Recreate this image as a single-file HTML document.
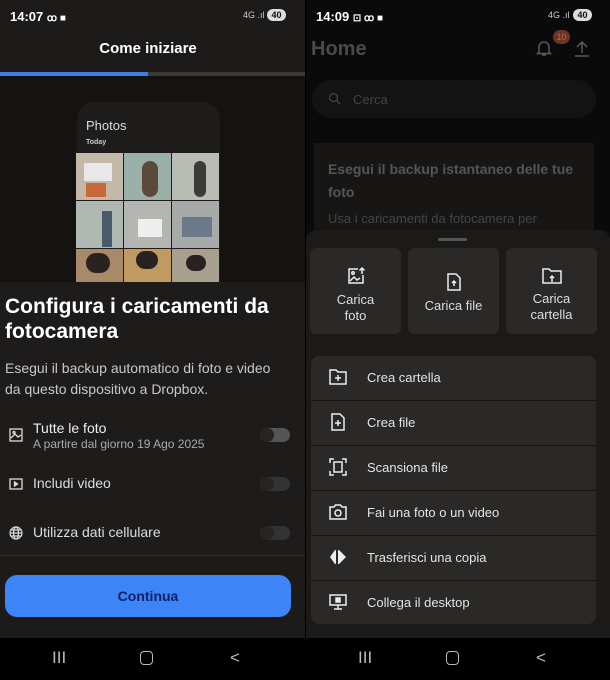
<!DOCTYPE html>
<html><head><meta charset="utf-8"><style>
*{margin:0;padding:0;box-sizing:border-box}
body{width:610px;height:680px;background:#000;font-family:"Liberation Sans",sans-serif;color:#eee;position:relative;overflow:hidden}
.abs{position:absolute}
.l{left:0;top:0;width:305px;height:680px;background:#141312}
.r{left:306px;top:0;width:304px;height:680px;background:#0b0a0a}
.sb{font-size:13px;font-weight:bold;color:#fff}
.nav{position:absolute;bottom:0;height:42px;background:#000;width:100%}
.nav span{position:absolute;top:10px;color:#bbb;font-size:17px;font-weight:300}
.tog{position:absolute;width:30px;height:14px;border-radius:7px;background:#333}
.tog:after{content:"";position:absolute;left:0;top:0;width:14px;height:14px;border-radius:7px;background:#262524}
.tile{position:absolute;top:248px;width:91px;height:86px;background:#2a2928;border-radius:6px;text-align:center;font-size:13px;color:#ddd;line-height:16px}
.row{position:absolute;left:0;width:285px;height:44px;background:#2a2928;font-size:13px;color:#e4e4e4}
.row b{font-weight:normal;position:absolute;left:56px;top:14px}
.row svg{position:absolute;left:18px;top:12px}
.g{position:absolute;width:47px;height:47px;overflow:hidden}
</style></head><body>
<div class="abs l">
 <div class="abs" style="left:0;top:0;width:305px;height:72px;background:#1d1b1a"></div>
 <div class="abs sb" style="left:10px;top:9px">14:07 <span style="font-size:10px">ꝏ ■</span></div>
 <div class="abs" style="left:243px;top:10px;font-size:9px;color:#ccc">4G .ıl</div>
 <div class="abs" style="left:267px;top:9px;width:19px;height:12px;border-radius:6px;background:#ddd;color:#111;font-size:9px;text-align:center;line-height:12px;font-weight:bold">40</div>
 <div class="abs" style="left:0;top:40px;width:296px;text-align:center;font-size:15px;font-weight:bold;color:#fff">Come iniziare</div>
 <div class="abs" style="left:0;top:72px;width:305px;height:4px;background:#3a3938"></div>
 <div class="abs" style="left:0;top:72px;width:148px;height:4px;background:#3f7de8"></div>
 <div class="abs" style="left:77px;top:102px;width:143px;height:180px;background:#1e1d1c;border-radius:18px 18px 0 0"></div>
 <div class="abs" style="left:86px;top:118px;font-size:13px;color:#ddd">Photos</div>
 <div class="abs" style="left:86px;top:139px;font-size:7px;color:#ccc;font-weight:bold">Today</div>
 <div class="g" style="left:76px;top:153px;background:#c4b8a8"><div class="abs" style="left:8px;top:10px;width:28px;height:18px;background:#e8e8e8"></div><div class="abs" style="left:10px;top:30px;width:20px;height:14px;background:#c8693a"></div></div>
 <div class="g" style="left:124px;top:153px;background:#9bb0a8"><div class="abs" style="left:18px;top:8px;width:16px;height:36px;background:#5a4a3a;border-radius:8px"></div></div>
 <div class="g" style="left:172px;top:153px;background:#b8bcb4"><div class="abs" style="left:22px;top:8px;width:12px;height:36px;background:#3a3a38;border-radius:6px"></div></div>
 <div class="g" style="left:76px;top:201px;background:#b0b8b4"><div class="abs" style="left:26px;top:10px;width:10px;height:36px;background:#4a5a6a"></div></div>
 <div class="g" style="left:124px;top:201px;background:#b4b6b2"><div class="abs" style="left:14px;top:18px;width:24px;height:18px;background:#eee"></div></div>
 <div class="g" style="left:172px;top:201px;background:#a6aaa8"><div class="abs" style="left:10px;top:16px;width:30px;height:20px;background:#6a7a8a"></div></div>
 <div class="g" style="left:76px;top:249px;height:33px;background:#a88a68"><div class="abs" style="left:10px;top:4px;width:24px;height:20px;background:#2a2220;border-radius:10px"></div></div>
 <div class="g" style="left:124px;top:249px;height:33px;background:#c09a60"><div class="abs" style="left:12px;top:2px;width:22px;height:18px;background:#2a2220;border-radius:10px"></div></div>
 <div class="g" style="left:172px;top:249px;height:33px;background:#a8a08e"><div class="abs" style="left:14px;top:6px;width:20px;height:16px;background:#2a2220;border-radius:9px"></div></div>
 <div class="abs" style="left:0;top:282px;width:305px;height:273px;background:#1e1c1b"></div>
 <div class="abs" style="left:5px;top:294px;font-size:21px;font-weight:bold;color:#fff;line-height:25px">Configura i caricamenti da<br>fotocamera</div>
 <div class="abs" style="left:5px;top:358px;font-size:14px;color:#c8c8c8;line-height:21px">Esegui il backup automatico di foto e video<br>da questo dispositivo a Dropbox.</div>
 <svg class="abs" style="left:9px;top:428px" width="14" height="14" viewBox="0 0 14 14" fill="none" stroke="#ddd" stroke-width="1.3"><rect x="1" y="1" width="12" height="12"/><path d="M2 10l4-4 3 3 3-2"/><circle cx="5" cy="4.5" r="1"/></svg>
 <div class="abs" style="left:33px;top:420px;font-size:14px;color:#eee">Tutte le foto</div>
 <div class="abs" style="left:33px;top:437px;font-size:12px;color:#aaa">A partire dal giorno 19 Ago 2025</div>
 <div class="tog" style="left:260px;top:428px;background:#555"></div>
 <svg class="abs" style="left:9px;top:477px" width="14" height="14" viewBox="0 0 14 14" fill="none" stroke="#ddd" stroke-width="1.3"><rect x="1" y="2" width="12" height="10"/><path d="M5.5 5v4l3-2z" fill="#ddd"/></svg>
 <div class="abs" style="left:33px;top:475px;font-size:14px;color:#ddd">Includi video</div>
 <div class="tog" style="left:260px;top:477px"></div>
 <svg class="abs" style="left:9px;top:526px" width="14" height="14" viewBox="0 0 14 14" fill="none" stroke="#ddd" stroke-width="1.2"><circle cx="7" cy="7" r="6"/><ellipse cx="7" cy="7" rx="2.5" ry="6"/><path d="M1 7h12M2 4h10M2 10h10"/></svg>
 <div class="abs" style="left:33px;top:524px;font-size:14px;color:#ddd">Utilizza dati cellulare</div>
 <div class="tog" style="left:260px;top:526px"></div>
 <div class="abs" style="left:0;top:555px;width:305px;height:83px;background:#1c1b1a;border-top:1px solid #2c2b2a"></div>
 <div class="abs" style="left:5px;top:575px;width:286px;height:42px;border-radius:12px;background:#3d84f7;color:#0d1f66;font-size:14px;font-weight:bold;text-align:center;line-height:42px">Continua</div>
 <div class="nav"><span style="left:52px">III</span><span style="left:140px;top:13px;width:13px;height:14px;border:1.3px solid #bbb;border-radius:4px"></span><span style="left:230px">&lt;</span></div>
</div>
<div class="abs r">
 <div class="abs sb" style="left:10px;top:9px">14:09 <span style="font-size:10px">⊡ ꝏ ■</span></div>
 <div class="abs" style="left:242px;top:10px;font-size:9px;color:#ccc">4G .ıl</div>
 <div class="abs" style="left:267px;top:9px;width:19px;height:12px;border-radius:6px;background:#ddd;color:#111;font-size:9px;text-align:center;line-height:12px;font-weight:bold">40</div>
 <div class="abs" style="left:5px;top:38px;font-size:20px;font-weight:bold;color:#4a4a4a">Home</div>
 <svg class="abs" style="left:228px;top:38px" width="20" height="20" viewBox="0 0 20 20" fill="none" stroke="#5a5a5a" stroke-width="1.5"><path d="M5 14V9a5 5 0 0110 0v5l1.5 1.5h-13zM8 17h4"/></svg>
 <div class="abs" style="left:247px;top:30px;width:17px;height:14px;border-radius:7px;background:#6e3423;color:#aa7060;font-size:9px;text-align:center;line-height:14px">10</div>
 <svg class="abs" style="left:266px;top:38px" width="20" height="20" viewBox="0 0 20 20" fill="none" stroke="#5a5a5a" stroke-width="1.5"><path d="M10 15V4M5 9l5-5 5 5M3 18h14"/></svg>
 <div class="abs" style="left:6px;top:80px;width:284px;height:38px;border-radius:19px;background:#141313"></div>
 <svg class="abs" style="left:22px;top:92px" width="13" height="13" viewBox="0 0 13 13" fill="none" stroke="#444" stroke-width="1.3"><circle cx="5.5" cy="5.5" r="4"/><path d="M8.5 8.5l3.5 3.5"/></svg>
 <div class="abs" style="left:47px;top:92px;font-size:13px;color:#444">Cerca</div>
 <div class="abs" style="left:8px;top:143px;width:280px;height:90px;background:#171615"></div>
 <div class="abs" style="left:22px;top:158px;font-size:14px;font-weight:bold;color:#555;line-height:23px">Esegui il backup istantaneo delle tue<br>foto</div>
 <div class="abs" style="left:22px;top:211px;font-size:13px;color:#444">Usa i caricamenti da fotocamera per</div>
 <div class="abs" style="left:0;top:230px;width:304px;height:408px;background:#1b1a19;border-radius:10px 10px 0 0"></div>
 <div class="abs" style="left:132px;top:238px;width:29px;height:3px;border-radius:2px;background:#555"></div>
 <div class="tile" style="left:4px"><svg style="margin-top:19px" width="18" height="18" viewBox="0 0 18 18" fill="none" stroke="#eee" stroke-width="1.5"><path d="M11 2H2v14h14V8"/><path d="M3 14l4-4 3 3 3-2"/><circle cx="6" cy="6" r="1.2"/><path d="M15 7V1M12.5 3.5L15 1l2.5 2.5"/></svg><div style="margin-top:3px">Carica<br>foto</div></div>
 <div class="tile" style="left:102px"><svg style="margin-top:25px" width="16" height="18" viewBox="0 0 16 18" fill="none" stroke="#eee" stroke-width="1.5"><path d="M2 1h8l4 4v12H2z"/><path d="M8 13V8M6 10l2-2 2 2" /></svg><div style="margin-top:3px">Carica file</div></div>
 <div class="tile" style="left:200px"><svg style="margin-top:19px" width="20" height="17" viewBox="0 0 20 17" fill="none" stroke="#eee" stroke-width="1.5"><path d="M1 2h6l2 2h10v12H1z"/><path d="M10 15V9M8 11l2-2 2 2"/></svg><div style="margin-top:3px">Carica<br>cartella</div></div>
 <div class="abs" style="left:5px;top:356px;width:285px;height:268px;border-radius:8px;overflow:hidden;background:#151413">
  <div class="row" style="top:0"><svg width="18" height="18" viewBox="0 0 18 18" fill="none" stroke="#eee" stroke-width="1.5"><path d="M1 2h6l2 2h8v12H1z"/><path d="M9 7v6M6 10h6"/></svg><b>Crea cartella</b></div>
  <div class="row" style="top:45px"><svg width="18" height="18" viewBox="0 0 18 18" fill="none" stroke="#eee" stroke-width="1.5"><path d="M3 1h8l4 4v12H3z"/><path d="M9 7v6M6 10h6"/></svg><b>Crea file</b></div>
  <div class="row" style="top:90px"><svg width="18" height="18" viewBox="0 0 18 18" fill="none" stroke="#eee" stroke-width="1.5"><path d="M1 5V1h4M13 1h4v4M17 13v4h-4M5 17H1v-4"/><rect x="5" y="4" width="8" height="10"/></svg><b>Scansiona file</b></div>
  <div class="row" style="top:135px"><svg width="18" height="18" viewBox="0 0 18 18" fill="none" stroke="#eee" stroke-width="1.5"><path d="M1 4h4l1.5-2h5L13 4h4v12H1z"/><circle cx="9" cy="10" r="3"/></svg><b>Fai una foto o un video</b></div>
  <div class="row" style="top:180px"><svg width="18" height="18" viewBox="0 0 18 18" fill="#eee"><path d="M6 2L1 9l5 7h1V2zM10 2l7 7-7 7H9V2z"/></svg><b>Trasferisci una copia</b></div>
  <div class="row" style="top:225px;height:43px"><svg width="18" height="18" viewBox="0 0 18 18" fill="none" stroke="#eee" stroke-width="1.5"><rect x="1" y="2" width="16" height="10"/><path d="M9 12v4M5 16h8"/><rect x="7" y="5" width="4" height="4" fill="#eee"/></svg><b>Collega il desktop</b></div>
 </div>
 <div class="nav"><span style="left:52px">III</span><span style="left:140px;top:13px;width:13px;height:14px;border:1.3px solid #bbb;border-radius:4px"></span><span style="left:230px">&lt;</span></div>
</div>
</body></html>
